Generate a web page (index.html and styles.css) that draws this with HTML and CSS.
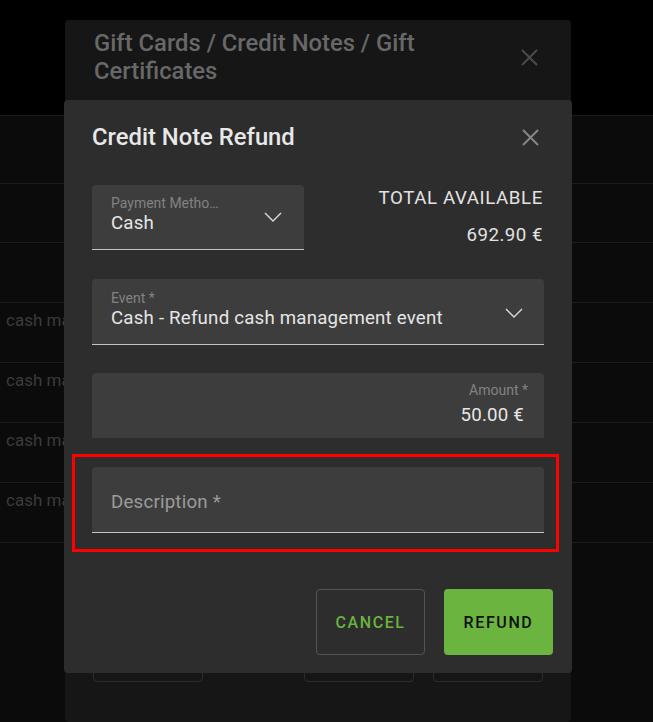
FILE: index.html
```html
<!DOCTYPE html>
<html lang="en">
	<head>
		<meta charset="UTF-8" />
		<meta name="viewport" content="width=device-width, initial-scale=1.0" />
		<title>Credit Note Refund</title>
		<link rel="stylesheet" href="styles.css">
	</head>
	<body>
		<div class="screen">
			<div class="table-head"></div>
			<div class="table-body">
				<div class="row row-first"></div>
				<div class="row row-short"></div>
				<div class="row"></div>
				<div class="row"><span class="cell">cash management event</span></div>
				<div class="row"><span class="cell">cash management event</span></div>
				<div class="row"><span class="cell">cash management event</span></div>
				<div class="row"><span class="cell">cash management event</span></div>
				<div class="row row-end"></div>
			</div>

			<section class="dialog dialog-back">
				<header class="back-header">
					<h2 class="back-title">Gift Cards / Credit Notes / Gift Certificates</h2>
					<button class="icon-btn back-close" aria-label="Close">
						<svg width="17" height="17" viewBox="0 0 17 17"><path d="M1 1L16 16M16 1L1 16" stroke="currentColor" stroke-width="2" fill="none"/></svg>
					</button>
				</header>
				<footer class="back-actions">
					<span class="ghost-btn"></span>
					<span class="ghost-btn ghost-push"></span>
					<span class="ghost-btn"></span>
				</footer>
			</section>

			<section class="dialog dialog-front">
				<header class="dialog-header">
					<h2 class="dialog-title">Credit Note Refund</h2>
					<button class="icon-btn front-close" aria-label="Close">
						<svg width="17" height="17" viewBox="0 0 17 17"><path d="M1 1L16 16M16 1L1 16" stroke="currentColor" stroke-width="2" fill="none"/></svg>
					</button>
				</header>

				<div class="dialog-body">
					<div class="top-row">
						<div class="field field-method">
							<div class="field-text">
								<span class="field-label label-cut">Payment Method *</span>
								<span class="field-value">Cash</span>
							</div>
							<svg class="chevron" width="18" height="10" viewBox="0 0 18 10"><path d="M1 1L9 9L17 1" stroke="currentColor" stroke-width="1.4" fill="none"/></svg>
						</div>
						<div class="total">
							<div class="total-label">TOTAL AVAILABLE</div>
							<div class="total-value">692.90 €</div>
						</div>
					</div>

					<div class="field field-event">
						<div class="field-text">
							<span class="field-label">Event *</span>
							<span class="field-value">Cash - Refund cash management event</span>
						</div>
						<svg class="chevron" width="18" height="10" viewBox="0 0 18 10"><path d="M1 1L9 9L17 1" stroke="currentColor" stroke-width="1.4" fill="none"/></svg>
					</div>

					<div class="field field-amount">
						<span class="field-label">Amount *</span>
						<span class="field-value amount-value">50.00 €</span>
					</div>

					<div class="highlight">
						<div class="field field-description">
							<span class="placeholder">Description *</span>
						</div>
					</div>
				</div>

				<footer class="dialog-actions">
					<button class="btn btn-outline">Cancel</button>
					<button class="btn btn-primary">Refund</button>
				</footer>
			</section>
		</div>
	</body>
</html>
```

FILE: styles.css
```css
* {
	box-sizing: border-box;
}
body {
	margin: 0;
	background: #000;
	font-family: Roboto, "Liberation Sans", sans-serif;
}
.screen {
	position: relative;
	width: 653px;
	height: 722px;
	overflow: hidden;
	background: #0b0b0b;
}

/* table behind the dialogs */
.table-head {
	height: 115px;
	background: #000;
}
.row {
	height: 60px;
	border-top: 1px solid #1b1b1b;
	padding: 7px 0 0 6px;
}
.row-first {
	height: 68px;
}
.row-short {
	height: 59px;
}
.cell {
	display: block;
	font-size: 17px;
	line-height: 20px;
	color: #3b3b3b;
	white-space: nowrap;
}

.dialog {
	position: absolute;
	border-radius: 4px;
}
.icon-btn {
	display: flex;
	align-items: center;
	justify-content: center;
	width: 24px;
	height: 24px;
	padding: 0;
	border: 0;
	background: none;
}

/* dialog underneath */
.dialog-back {
	left: 65px;
	top: 20px;
	width: 506px;
	height: 702px;
	background: #161616;
	display: flex;
	flex-direction: column;
}
.back-header {
	display: flex;
	align-items: center;
	justify-content: space-between;
	padding: 9px 30px 0 29px;
}
.back-title {
	margin: 0;
	font-size: 23.8px;
	line-height: 28px;
	font-weight: 500;
	color: #686868;
	max-width: 400px;
}
.back-close {
	color: #4a4a4a;
}
.back-actions {
	margin-top: auto;
	display: flex;
	gap: 19px;
	padding: 0 28px 40px 28px;
}
.ghost-btn {
	width: 110px;
	height: 66px;
	border: 1px solid #2c2c2c;
	border-radius: 4px;
}
.ghost-push {
	margin-left: auto;
}

/* refund dialog */
.dialog-front {
	left: 64px;
	top: 100px;
	width: 508px;
	background: #2d2d2d;
	color: #e6e6e6;
}
.dialog-header {
	display: flex;
	align-items: center;
	justify-content: space-between;
	padding: 22px 30px 0 28px;
}
.dialog-title {
	margin: 0;
	font-size: 23.8px;
	line-height: 30px;
	font-weight: 500;
	color: #e8e8e8;
}
.front-close {
	color: #868686;
}
.dialog-body {
	padding: 33px 28px 0;
}
.top-row {
	display: flex;
	justify-content: space-between;
	align-items: flex-start;
}
.field {
	display: flex;
	align-items: flex-start;
	justify-content: space-between;
	height: 66px;
	padding: 10px 21px 0 19px;
	background: #3d3d3d;
	border-radius: 4px 4px 0 0;
	border-bottom: 1px solid #c4c4c4;
}
.field-text {
	display: flex;
	flex-direction: column;
	min-width: 0;
}
.field-label {
	font-size: 14px;
	line-height: 16px;
	color: #828282;
	white-space: nowrap;
}
.label-cut {
	max-width: 111px;
	overflow: hidden;
	text-overflow: ellipsis;
}
.field-value {
	font-size: 18.7px;
	line-height: 24px;
	letter-spacing: 0.2px;
	color: #e6e6e6;
	white-space: nowrap;
}
.chevron {
	flex: none;
	margin-top: 17px;
	color: #dcdcdc;
}
.field-method {
	width: 212px;
	height: 65px;
	padding-right: 22px;
}
.field-event {
	margin-top: 29px;
	padding-top: 11px;
}
.field-event .chevron {
	margin-top: 18px;
}
.total {
	text-align: right;
	padding-top: 3px;
	padding-right: 1px;
	font-size: 18.7px;
	line-height: 20px;
	color: #e2e2e2;
}
.total-label {
	letter-spacing: 0.6px;
}
.total-value {
	margin-top: 17px;
	letter-spacing: 0.5px;
}
.field-amount {
	margin-top: 28px;
	height: 65px;
	border-bottom: 0;
	flex-direction: column;
	align-items: flex-end;
	justify-content: flex-start;
	padding: 9px 16px 0 19px;
}
.amount-value {
	margin-top: 5px;
	margin-right: 4px;
}

/* red outline marking the description field */
.highlight {
	margin: 16px -15px -19px -20px;
	border: 3px solid #f00;
	padding: 10px 12px 16px 17px;
}
.field-description {
	padding-top: 23px;
}
.placeholder {
	font-size: 18.7px;
	line-height: 24px;
	letter-spacing: 0.2px;
	color: #9b9b9b;
}

.dialog-actions {
	display: flex;
	justify-content: flex-end;
	gap: 19px;
	padding: 56px 19px 18px 0;
}
.btn {
	width: 109px;
	height: 66px;
	border-radius: 4px;
	font-family: Roboto, "Liberation Sans", sans-serif;
	font-size: 16px;
	font-weight: 500;
	letter-spacing: 1.6px;
	text-transform: uppercase;
}
.btn-outline {
	background: transparent;
	border: 1px solid #555;
	color: #6ab33e;
}
.btn-primary {
	background: #6bb43f;
	border: 0;
	color: #111;
}
```
